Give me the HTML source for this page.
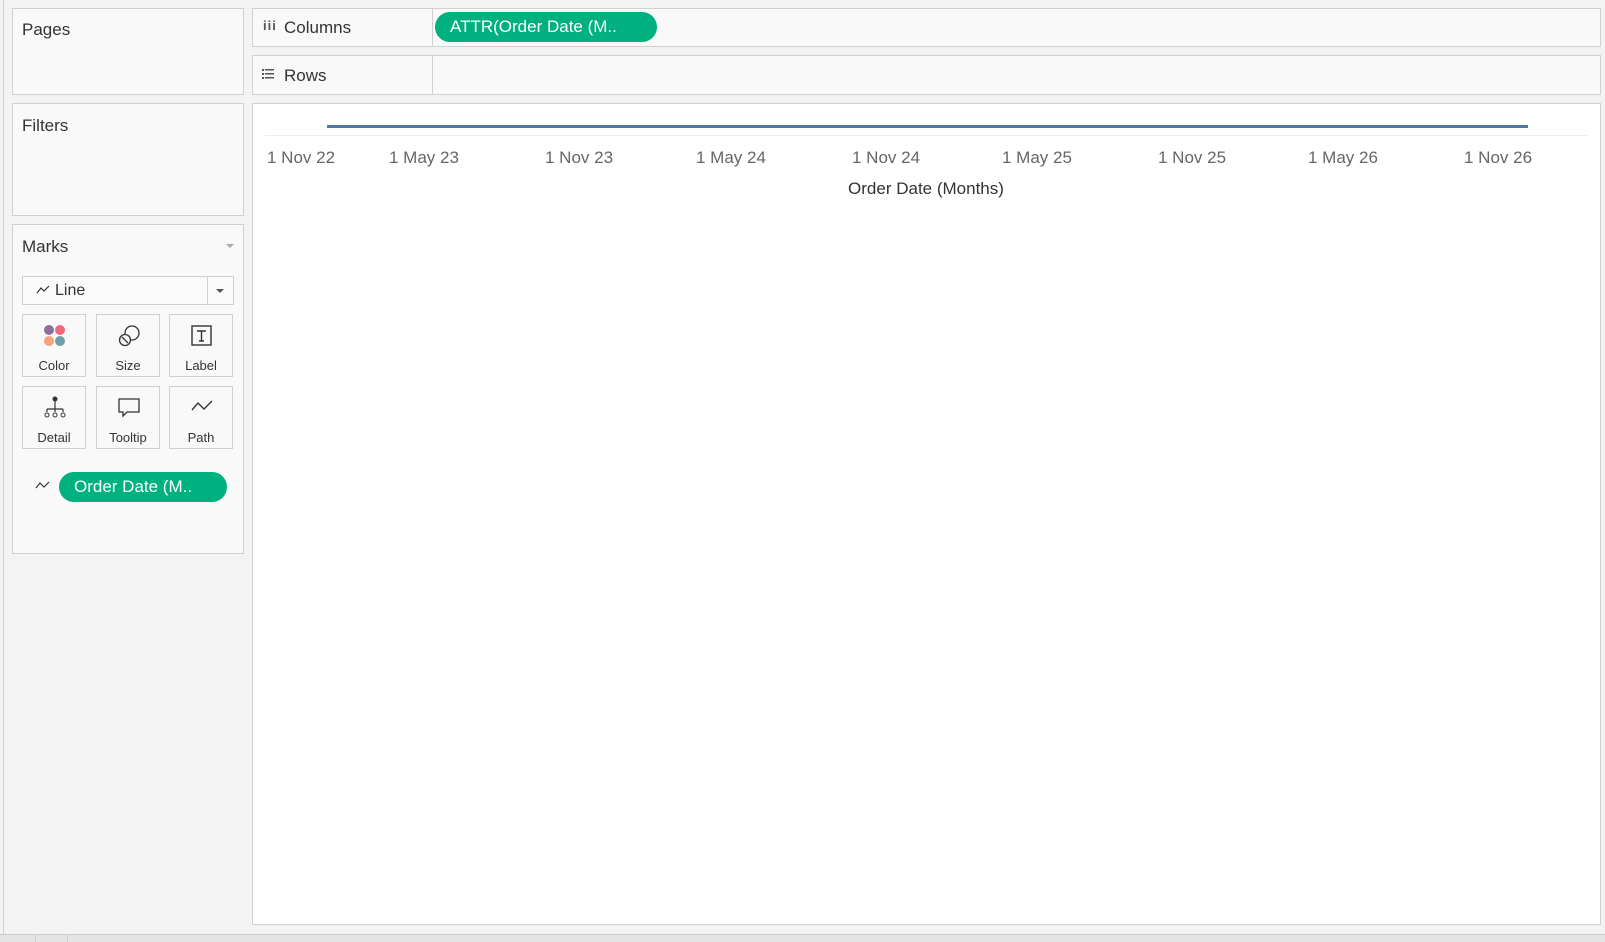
<!DOCTYPE html>
<html><head><meta charset="utf-8"><style>
*{box-sizing:border-box;margin:0;padding:0}
body{width:1605px;height:942px;background:#f3f3f3;position:relative;overflow:hidden;font-family:"Liberation Sans",sans-serif;color:#333}
.a{position:absolute}
.panel{position:absolute;border:1px solid #d0d0d0;background:#f9f9f9}
.t{position:absolute;font-size:17px;color:#333}
.pill{position:absolute;background:#00b180;color:#fff;border-radius:16px;font-size:17px;display:flex;align-items:center;padding-left:15px}
.btn{position:absolute;border:1px solid #d0d0d0;background:#f9f9f9;width:64px;height:63px}
.btn span{position:absolute;bottom:3px;left:0;right:0;text-align:center;font-size:13px;color:#333}
.btn svg{position:absolute;left:20px;top:9px}
.tick{position:absolute;top:148px;font-size:17px;color:#666;white-space:nowrap;letter-spacing:0px}
</style></head><body>
<div class="a" style="left:3px;top:0;width:1px;height:934px;background:#d0d0d0"></div>
<div class="panel" style="left:12px;top:8px;width:232px;height:87px"></div>
<div class="t" style="left:22px;top:20px">Pages</div>
<div class="panel" style="left:12px;top:103px;width:232px;height:113px"></div>
<div class="t" style="left:22px;top:116px">Filters</div>
<div class="panel" style="left:12px;top:224px;width:232px;height:330px"></div>
<div class="t" style="left:22px;top:237px">Marks</div>
<div class="a" style="left:226px;top:244px;border-left:4px solid transparent;border-right:4px solid transparent;border-top:4px solid #aaa"></div>
<div class="a" style="left:22px;top:276px;width:212px;height:29px;border:1px solid #d0d0d0;background:#fafafa"></div>
<div class="a" style="left:207px;top:277px;width:1px;height:27px;background:#d0d0d0"></div>
<div class="a" style="left:216px;top:289px;border-left:4px solid transparent;border-right:4px solid transparent;border-top:4px solid #555"></div>
<svg class="a" style="left:36px;top:285px" width="14" height="10"><path d="M1 8 L5 3 L8 6 L13 1" fill="none" stroke="#333" stroke-width="1.2"/></svg>
<div class="a" style="left:55px;top:282px;font-size:16px">Line</div>
<div class="btn" style="left:22px;top:314px"><svg width="24" height="24"><circle cx="6" cy="6" r="5" fill="#8c6f9c"/><circle cx="17" cy="6" r="5" fill="#f06879"/><circle cx="6" cy="17" r="5" fill="#f3a47c"/><circle cx="17" cy="17" r="5" fill="#6f9fa8"/></svg><span>Color</span></div>
<div class="btn" style="left:96px;top:314px"><svg width="26" height="24"><circle cx="15" cy="9" r="7" fill="none" stroke="#333" stroke-width="1.3"/><circle cx="8" cy="16" r="5.5" fill="#f9f9f9" stroke="#333" stroke-width="1.3"/><path d="M5 13 L11 19" stroke="#333" stroke-width="1.3"/></svg><span>Size</span></div>
<div class="btn" style="left:169px;top:314px"><svg width="24" height="24"><rect x="2" y="2" width="19" height="19" fill="none" stroke="#333" stroke-width="1.4"/><path d="M7 7 H16 M11.5 7 V17 M9 17 H14" stroke="#333" stroke-width="1.4" fill="none"/></svg><span>Label</span></div>
<div class="btn" style="left:22px;top:386px"><svg width="24" height="24"><circle cx="12" cy="3" r="2.5" fill="#333"/><path d="M12 5 V13 M4 13 V16 M12 13 V16 M20 13 V16 M4 13 H20" stroke="#333" stroke-width="1.2" fill="none"/><circle cx="4" cy="19" r="2" fill="none" stroke="#333"/><circle cx="12" cy="19" r="2" fill="none" stroke="#333"/><circle cx="20" cy="19" r="2" fill="none" stroke="#333"/></svg><span>Detail</span></div>
<div class="btn" style="left:96px;top:386px"><svg width="24" height="24"><path d="M2 3 H22 V16 H10 L6 20 V16 H2 Z" fill="none" stroke="#333" stroke-width="1.3"/></svg><span>Tooltip</span></div>
<div class="btn" style="left:169px;top:386px"><svg width="26" height="24"><path d="M2 14 L8 7 L14 13 L22 5" fill="none" stroke="#333" stroke-width="1.4"/></svg><span>Path</span></div>
<svg class="a" style="left:35px;top:480px" width="15" height="10"><path d="M1 8 L5 3 L9 7 L14 2" fill="none" stroke="#333" stroke-width="1.2"/></svg>
<div class="pill" style="left:59px;top:472px;width:168px;height:30px">Order Date (M..</div>

<div class="a" style="left:252px;top:8px;width:1349px;height:39px;border:1px solid #d0d0d0;background:#f9f9f9"></div>
<div class="a" style="left:432px;top:8px;width:1px;height:39px;background:#d0d0d0"></div>
<div class="a" style="left:263px;top:18px;font-size:13px;font-weight:bold;color:#555;letter-spacing:1px">iii</div>
<div class="t" style="left:284px;top:18px">Columns</div>
<div class="pill" style="left:435px;top:12px;width:222px;height:30px">ATTR(Order Date (M..</div>
<div class="a" style="left:252px;top:55px;width:1349px;height:40px;border:1px solid #d0d0d0;background:#f9f9f9"></div>
<div class="a" style="left:432px;top:55px;width:1px;height:40px;background:#d0d0d0"></div>
<svg class="a" style="left:262px;top:69px" width="12" height="10"><g fill="#555"><rect x="0" y="0" width="2" height="2"/><rect x="0" y="4" width="2" height="2"/><rect x="0" y="8" width="2" height="2"/><rect x="3" y="0" width="9" height="1.5"/><rect x="3" y="4" width="9" height="1.5"/><rect x="3" y="8" width="9" height="1.5"/></g></svg>
<div class="t" style="left:284px;top:66px">Rows</div>

<div class="a" style="left:252px;top:103px;width:1349px;height:822px;border:1px solid #d0d0d0;background:#fff"></div>
<div class="a" style="left:265px;top:135px;width:1323px;height:1px;background:#eee"></div>
<div class="a" style="left:327px;top:125px;width:1201px;height:3px;background:#4e79a7"></div>
<div class="tick" style="left:267px">1 Nov 22</div>
<div class="tick" style="left:389px">1 May 23</div>
<div class="tick" style="left:545px">1 Nov 23</div>
<div class="tick" style="left:696px">1 May 24</div>
<div class="tick" style="left:852px">1 Nov 24</div>
<div class="tick" style="left:1002px">1 May 25</div>
<div class="tick" style="left:1158px">1 Nov 25</div>
<div class="tick" style="left:1308px">1 May 26</div>
<div class="tick" style="left:1464px">1 Nov 26</div>
<div class="a" style="left:826px;top:179px;width:200px;text-align:center;font-size:17px;color:#333">Order Date (Months)</div>

<div class="a" style="left:0;top:934px;width:1605px;height:8px;background:#e4e4e4;border-top:1px solid #ccc"></div>
<div class="a" style="left:35px;top:934px;width:1px;height:8px;background:#ccc"></div>
<div class="a" style="left:67px;top:934px;width:1px;height:8px;background:#ccc"></div>
</body></html>
